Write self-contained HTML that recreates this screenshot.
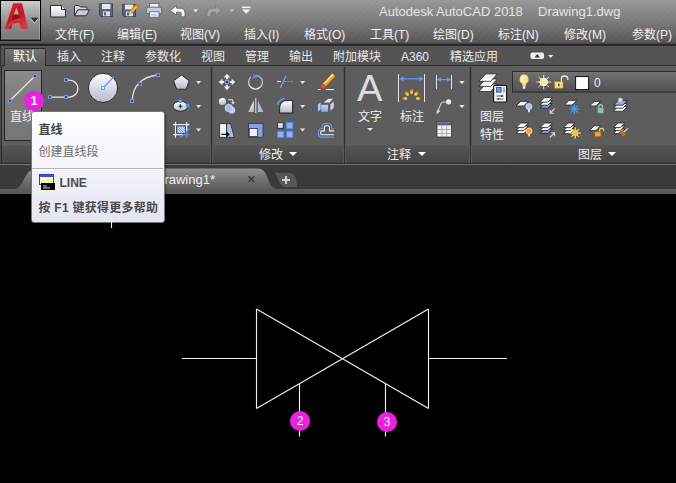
<!DOCTYPE html>
<html lang="zh-CN">
<head>
<meta charset="utf-8">
<title>Autodesk AutoCAD 2018 - Drawing1.dwg</title>
<style>
*{margin:0;padding:0;box-sizing:border-box}
html,body{width:676px;height:483px;overflow:hidden;background:#000}
body{position:relative;font-family:"Liberation Sans","Noto Sans CJK SC",sans-serif;font-size:12px;color:#e6e6e6}
.abs{position:absolute}
.t{position:absolute;white-space:nowrap;line-height:14px;height:14px}
#titlebg{left:0;top:0;width:676px;height:43px;background:linear-gradient(#989898,#7a7a7a 51%,#545454)}
#titlebg:after{content:"";position:absolute;inset:0;background:repeating-linear-gradient(135deg,rgba(255,255,255,.018) 0 2px,rgba(0,0,0,0) 2px 5px)}
#line1{left:0;top:43px;width:676px;height:3px;background:linear-gradient(#484848 0,#484848 33.3%,#222 33.4%,#222 66.6%,#2b2b2b 66.7%)}
#tabrow{left:0;top:46px;width:676px;height:20px;background:#545454}
#tabline{left:46px;top:65px;width:630px;height:1px;background:#2d2d2d}
#ribbon{left:0;top:66px;width:676px;height:79px;background:#5d5d5d}
#ptitle{left:0;top:145px;width:676px;height:18px;background:linear-gradient(#565656,#4c4c4c 50%,#454545)}
#line2{left:0;top:163px;width:676px;height:1px;background:#2a2a2a}
#line3{left:0;top:164px;width:676px;height:1px;background:#767676}
#docbar{left:0;top:165px;width:676px;height:24px;background:#3a3a3a}
#docstrip{left:0;top:189px;width:676px;height:5px;background:linear-gradient(#5c5c5c,#575757)}
.menu{top:28px;font-size:12px;color:#f0f0f0}
.tab{top:50px;font-size:12px;color:#e8e8e8}
#seltab{left:4px;top:48px;width:42px;height:18px;background:linear-gradient(#747474,#666 50%,#5d5d5d);border:1px solid #2c2c2c;border-bottom:none;border-radius:2px 2px 0 0}
.pt{top:148px;font-size:12px;color:#eee}
.vsep{position:absolute;top:67px;width:1px;height:95px;background:#3a3a3a}
.tri{position:absolute;width:0;height:0;border-left:4px solid transparent;border-right:4px solid transparent;border-top:4px solid #fff}
.stri{position:absolute;width:0;height:0;border-left:3px solid transparent;border-right:3px solid transparent;border-top:3px solid #e8e8e8}
.dot{position:absolute;width:20px;height:20px;border-radius:50%;background:#ee1fe0;color:#fff;text-align:center;font-size:12px;line-height:20px}
.lab{font-size:12px;color:#f0f0f0}
#tip{left:31px;top:111px;width:134px;height:112px;border:1px solid #767676;border-radius:3px;background:linear-gradient(#ffffff,#f4f4fa 50%,#e4e5f2);box-shadow:1px 1px 2px rgba(0,0,0,.4)}
</style>
</head>
<body>
<div id="titlebg" class="abs"></div>
<div id="line1" class="abs"></div>
<div id="tabrow" class="abs"></div>
<div id="ribbon" class="abs"></div>
<div id="ptitle" class="abs"></div>
<div id="tabline" class="abs"></div>
<div id="line2" class="abs"></div>
<div id="line3" class="abs"></div>
<div id="docbar" class="abs"></div>
<div id="docstrip" class="abs"></div>

<!-- app button -->



<!-- top chrome icons -->
<svg class="abs" style="left:0;top:0" width="676" height="194" viewBox="0 0 676 194">
<defs>
<linearGradient id="gA" x1="0" y1="0" x2="1" y2="1"><stop offset="0" stop-color="#e8232b"/><stop offset=".55" stop-color="#c4161e"/><stop offset="1" stop-color="#e24a4a"/></linearGradient>
<linearGradient id="gW" x1="0" y1="0" x2="0" y2="1"><stop offset="0" stop-color="#ffffff"/><stop offset="1" stop-color="#cfd3e0"/></linearGradient>
<linearGradient id="gC" x1="0" y1="0" x2="0" y2="1"><stop offset="0" stop-color="#ffffff"/><stop offset="1" stop-color="#b4b9cc"/></linearGradient>
<linearGradient id="gT" x1="0" y1="0" x2="0" y2="1"><stop offset="0" stop-color="#909090"/><stop offset=".5" stop-color="#747474"/><stop offset="1" stop-color="#5c5c5c"/></linearGradient>
<radialGradient id="gF" cx=".5" cy=".5" r=".5"><stop offset="0" stop-color="#fff3a0"/><stop offset=".5" stop-color="#f5a018"/><stop offset="1" stop-color="#c85a00"/></radialGradient>
<linearGradient id="gP" x1="0" y1="0" x2="0" y2="1"><stop offset="0" stop-color="#e86010"/><stop offset=".5" stop-color="#ffa818"/><stop offset="1" stop-color="#fff080"/></linearGradient>
<linearGradient id="gB" x1="0" y1="0" x2="1" y2="1"><stop offset="0" stop-color="#fffbe0"/><stop offset="1" stop-color="#f6d25a"/></linearGradient>
<linearGradient id="gD" x1="0" y1="0" x2="0" y2="1"><stop offset="0" stop-color="#737373"/><stop offset="1" stop-color="#505050"/></linearGradient>
<linearGradient id="gL" x1="0" y1="0" x2="0" y2="1"><stop offset="0" stop-color="#8c8c8c"/><stop offset=".4" stop-color="#7c7c7c"/><stop offset="1" stop-color="#767676"/></linearGradient>
<linearGradient id="gBtn" x1="0" y1="0" x2="0" y2="1"><stop offset="0" stop-color="#cbcbcb"/><stop offset=".55" stop-color="#8e8e8e"/><stop offset="1" stop-color="#787878"/></linearGradient>
<linearGradient id="gR" x1="0" y1="0" x2="0" y2="1"><stop offset="0" stop-color="#a8a8a8"/><stop offset="1" stop-color="#ececec"/></linearGradient>
<linearGradient id="gX" x1="0" y1="0" x2="0" y2="1"><stop offset="0" stop-color="#c0d6f6"/><stop offset="1" stop-color="#7ea6e4"/></linearGradient>
<linearGradient id="gS" x1="0" y1="0" x2="0" y2="1"><stop offset="0" stop-color="#e6e6ea"/><stop offset="1" stop-color="#ffffff"/></linearGradient>
</defs>
<!--APP-->
<g id="logo">
<rect x="0" y="0" width="41" height="40.8" fill="#000"/><rect x="1" y="1" width="39" height="38.5" fill="url(#gBtn)"/>
<path d="M13.2 3.2H22L28.2 29H21L19.4 22.6L12.2 23.6L11.4 29H4.8Z M16.5 7.8L13.4 14.6H19Z" fill="url(#gA)" fill-rule="evenodd"/><path d="M13.4 14.6H19L20 18.2L11.6 19.4Z" fill="#8e0a12" opacity=".75"/><path d="M5.6 28.6Q9 20 20 18.4L20.6 20.4Q11 21 8.6 28.8Z" fill="#f05a5a" opacity=".45"/>

<path d="M30.8 18.8H38.4L34.6 23.8Z" fill="#e8e8e8" opacity=".8"/><path d="M30.8 17.8H38.4L34.6 22.6Z" fill="#262c3a"/><rect x="39" y="1" width="1" height="38.5" fill="#fff" opacity=".22"/><rect x="1" y="38.5" width="39" height="1" fill="#fff" opacity=".2"/>
</g>
<!--QAT-->
<g id="qat">
<path d="M50.5 5.5H61.5L65.5 9.5V17H50.5Z" fill="url(#gW)" stroke="#2c2c2c"/>
<path d="M61.5 5.5V9.5H65.5" fill="#e8e8f0" stroke="#2c2c2c"/>
<path d="M74.5 15.5V6.5Q74.5 5.5 75.5 5.5H79L80.5 7H86Q87 7 87 8V9.5" fill="#d8dae2" stroke="#2c2c2c"/>
<path d="M74.5 15.8L77.8 9.8H89.6L86 15.8Z" fill="#c8ccd8" stroke="#2c2c2c"/>
<path d="M99.5 3.8H112.5V16.5H101L99.5 15Z" fill="#5a6478" stroke="#3a4252" stroke-width=".9"/>
<rect x="102" y="4" width="8.4" height="5" fill="#e4e6ee"/>
<rect x="103" y="11.4" width="7" height="4.8" fill="#d8dbe6"/>
<rect x="104.2" y="12.4" width="1.6" height="3" fill="#3a4252"/>
<path d="M122.5 4.4H135.5V16.5H124L122.5 15Z" fill="#5a6478" stroke="#3a4252" stroke-width=".9"/>
<rect x="125" y="4.6" width="8.2" height="4.8" fill="#e4e6ee"/>
<rect x="126" y="11.6" width="7" height="4.6" fill="#d8dbe6"/>
<rect x="127.2" y="12.6" width="1.6" height="2.8" fill="#3a4252"/>
<path d="M136.4 4.2L138.8 6.6L132.4 12.8L130 10.4Z" fill="#f4b020" stroke="#8a5a10" stroke-width=".5"/>
<path d="M136.4 4.2L138.8 6.6L137.8 7.6L135.4 5.2Z" fill="#e07818"/>
<path d="M130 10.4L132.4 12.8L129.2 13.6Z" fill="#f8ecd0" stroke="#5a4a30" stroke-width=".4"/>
<rect x="149.6" y="3.4" width="9.2" height="4.6" fill="#f2f3f7" stroke="#5a6070" stroke-width=".8"/>
<rect x="146.6" y="7.2" width="15" height="6.6" rx="1.6" fill="#c8ced9" stroke="#565c6a" stroke-width=".8"/>
<rect x="149.4" y="11.8" width="9.6" height="5.4" fill="#f6f7fb" stroke="#5a6070" stroke-width=".8"/>
<rect x="151" y="14.2" width="6.4" height="1.4" fill="#9cc0ee"/>
<path d="M170.4 10.4L176.6 5.4V8.2H180Q185 8.2 185 13V16.8H181.2V13.4Q181.2 12.2 179.6 12.2H176.6V15.4Z" fill="#f4f4f4" stroke="#5a5a5a" stroke-width=".8"/>
<path d="M221.6 10.4L215.4 5.4V8.2H212Q207 8.2 207 13V16.8H210.8V13.4Q210.8 12.2 212.4 12.2H215.4V15.4Z" fill="#a4a4a4" stroke="#747474" stroke-width=".7"/>
<path d="M193.2 9.2H198.4L195.8 12.2Z" fill="#e4e4e4"/>
<path d="M229.2 9.2H234.4L231.8 12.2Z" fill="#bcbcbc"/>
<rect x="242" y="6.6" width="8.4" height="1.6" fill="#f4f4f4"/>
<path d="M242 9.4H250.4L246.2 13.8Z" fill="#f4f4f4"/>
</g>
<!--TABICON-->
<rect x="530.5" y="52.5" width="13.5" height="6.5" rx="2" fill="#f0f0f0"/>
<path d="M534.5 57.5H540L537.2 54Z" fill="#333"/>
<path d="M548 55H553.4L550.7 58Z" fill="#e8e8e8"/>
<g id="rib">
<rect x="0" y="46" width="1" height="19" fill="#2e2e2e"/><rect x="0" y="65" width="5" height="1" fill="#2d2d2d"/><rect x="0" y="66" width="1" height="97" fill="#4a4a4a"/><rect x="1" y="66" width="1" height="97" fill="#2a2a2a"/>
<rect x="210" y="67" width="3" height="78" fill="#525252"/><rect x="210" y="145" width="3" height="18" fill="#595959"/><rect x="211" y="67" width="1" height="96" fill="#303030"/>
<rect x="343" y="67" width="3" height="78" fill="#525252"/><rect x="343" y="145" width="3" height="18" fill="#595959"/><rect x="344" y="67" width="1" height="96" fill="#303030"/>
<rect x="469" y="67" width="3" height="78" fill="#525252"/><rect x="469" y="145" width="3" height="18" fill="#595959"/><rect x="470" y="67" width="1" height="96" fill="#303030"/>
<rect x="4.5" y="70.5" width="37" height="70" fill="url(#gL)" stroke="#262626"/>
<path d="M10 100.5L35 76" stroke="#e6e6e6" stroke-width="1.3" fill="none"/><rect x="8.5" y="99.5" width="3" height="3" fill="#4a4a4a" stroke="#5c9dff" stroke-width="1"/><rect x="33.5" y="74.5" width="3" height="3" fill="#4a4a4a" stroke="#5c9dff" stroke-width="1"/>
<path d="M50 97H66M66 80H69.4A8.5 8.5 0 0 1 69.4 97H66" stroke="#ececec" stroke-width="1.25" fill="none"/><rect x="48.5" y="95.5" width="3" height="3" fill="#4a4a4a" stroke="#5c9dff" stroke-width="1"/><rect x="64.5" y="95.5" width="3" height="3" fill="#4a4a4a" stroke="#5c9dff" stroke-width="1"/><rect x="64.5" y="78.5" width="3" height="3" fill="#4a4a4a" stroke="#5c9dff" stroke-width="1"/>
<circle cx="103" cy="87.9" r="14.6" fill="url(#gC)" stroke="#2a2a2a" stroke-width="1"/><path d="M103 88L113.6 77" stroke="#5c9dff" stroke-width="1.2"/><rect x="101.5" y="86.5" width="3" height="3" fill="#eceef6" stroke="#5c9dff" stroke-width="1"/>
<path d="M132.3 100.6Q133 78 158 75" stroke="#dcdcdc" stroke-width="1.3" fill="none"/><rect x="130.5" y="99.5" width="3" height="3" fill="#4a4a4a" stroke="#5c9dff" stroke-width="1"/><rect x="138.5" y="82.5" width="3" height="3" fill="#4a4a4a" stroke="#5c9dff" stroke-width="1"/><rect x="156.5" y="73.5" width="3" height="3" fill="#4a4a4a" stroke="#5c9dff" stroke-width="1"/>
<path d="M181.4 75L189.2 80.8L186.2 89.2H176.6L173.6 80.8Z" fill="url(#gC)" stroke="#2a2a2a" stroke-width="1"/><path d="M196 81H201.2L198.6 84Z" fill="#e8e8e8"/>
<ellipse cx="180.4" cy="106.3" rx="7.3" ry="5" fill="url(#gC)" stroke="#2a2a2a"/><path d="M178.4 106.3H182.4M180.4 104.3V108.3" stroke="#222" stroke-width="1.1"/><rect x="179" y="100" width="2.6" height="2.6" fill="#9aa" stroke="#5c9dff" stroke-width=".9"/><rect x="186.2" y="104.2" width="2.6" height="2.6" fill="#777" stroke="#5c9dff" stroke-width=".9"/><path d="M196 105H201.2L198.6 108Z" fill="#e8e8e8"/>
<g stroke="#f0f0f0" stroke-width="1.2"><path d="M173 124.6H189.4M173 134.7H183M175.5 122V137.8M186.7 122V131"/></g><g stroke="#5c9dff" stroke-width="1.1"><path d="M183 134.7H189.4M186.7 131V137.8M189.4 128.6L180.4 137.6"/></g><rect x="177" y="126" width="8.2" height="7.6" fill="#e4ecfb" stroke="#2a4c9c" stroke-width="1"/><path d="M177.6 129L182 133.4M177.6 126.6L184.4 133.4M180 126.6L184.6 131.2M182.6 126.6L184.6 128.6M177.6 131.4L179.6 133.4" stroke="#5f8be0" stroke-width="1"/><path d="M196 128.5H201.2L198.6 131.5Z" fill="#e8e8e8"/>
<g fill="#f0f0f0"><path d="M227 73.8L230.2 77.4H228.1V79.2H225.9V77.4H223.8Z"/><path d="M227 73.8L230.2 77.4H228.1V79.2H225.9V77.4H223.8Z" transform="rotate(90 227 82)"/><path d="M227 73.8L230.2 77.4H228.1V79.2H225.9V77.4H223.8Z" transform="rotate(180 227 82)"/><path d="M227 73.8L230.2 77.4H228.1V79.2H225.9V77.4H223.8Z" transform="rotate(270 227 82)"/></g><rect x="225.5" y="80.5" width="3" height="3" fill="#444" stroke="#5c9dff" stroke-width="1"/>
<circle cx="255.5" cy="82.2" r="6.9" fill="none" stroke="url(#gR)" stroke-width="1.3"/><rect x="251" y="73" width="4.4" height="5" fill="#5d5d5d"/><path d="M253 74L258.4 76.4L253 79Z" fill="#4c8cf0"/>
<path d="M277 81.5H281" stroke="#ececec" stroke-width="1.1"/><path d="M284.2 81.5H286M287.4 81.5H289.2M290.6 81.5H292.8" stroke="#6aa6ff" stroke-width="1"/><path d="M280.4 87.8L286 76" stroke="#6aa6ff" stroke-width="1.2"/><path d="M300 81H305.2L302.6 84Z" fill="#e8e8e8"/>
<path d="M332.4 73.4L335.2 76.6L326.8 85.2L324.2 82.4Z" fill="#f0a020"/><path d="M332.4 73.4L333.8 75L325.4 83.6L324.2 82.4Z" fill="#ffe070"/><path d="M324 82.4L326.6 85.2L325.4 86.2L322.8 83.6Z" fill="#f4f4f4"/><circle cx="323.2" cy="86" r="2.5" fill="#e05010"/><path d="M318 89.5H320.6M325.8 89.5H334" stroke="#f0f0f0" stroke-width="1"/>
<circle cx="222.4" cy="101.5" r="3.6" fill="url(#gC)"/><circle cx="231.8" cy="110.2" r="3.4" fill="#bcd0f2"/><circle cx="228.8" cy="108" r="3.8" fill="#a4c0ea" stroke="#d4e2f8" stroke-width=".6"/><path d="M228.4 99.8H231.6Q233 99.8 233 101.2V102.6" stroke="#ececec" stroke-width="1.1" fill="none"/><path d="M231.2 102.2H234.8L233 104.4Z" fill="#ececec"/>
<path d="M253.8 100.6V112H248.2Z" fill="url(#gC)"/><path d="M257.8 100.6V112H263.4Z" fill="#a4bbe6"/><path d="M255.8 98V113" stroke="#e8e8e8" stroke-width="1"/>
<path d="M279.6 113V108.4Q279.6 100.4 288 100.4H292.6V113Z" fill="url(#gC)" stroke="#222" stroke-width="1"/><path d="M277.6 104.6Q279 99.4 284.6 98.2" stroke="#5c9dff" stroke-width="1.5" fill="none"/><path d="M300 105H305.2L302.6 108Z" fill="#e8e8e8"/>
<path d="M321.2 104.8H328V111.8H321.2Z" fill="url(#gX)"/><path d="M323.6 102.6L328.4 98.8H333L329.6 102.6Z" fill="#dce8fa"/><path d="M318 104.4L320.6 102.2V109.6L318 111.4Z" fill="#b4ccf0"/><path d="M330.4 104.2L333.8 101.6V108L330.4 110.4Z" fill="#c4d8f6"/>
<path d="M219.6 123.6H226.6V137.4H219.6Z" fill="#f4f4f4" stroke="#222" stroke-width=".8"/><path d="M226.6 123.6H230.6L234.4 137.4H226.6Z" fill="#a4bde8" stroke="#223" stroke-width=".8"/><path d="M221.4 134.4H228.6M226.6 132.4L229 134.4L226.6 136.4" stroke="#000" stroke-width="1.2" fill="none"/>
<rect x="248.4" y="123.4" width="14.6" height="13.8" fill="#86a2dc" stroke="#2a3040" stroke-width=".8"/><rect x="249.2" y="128.6" width="8.4" height="7.8" fill="#f0f0f4" stroke="#2a3040" stroke-width=".8"/>
<rect x="277.6" y="122.8" width="5.6" height="5.6" fill="url(#gC)" stroke="#222" stroke-width=".8"/>
<rect x="286.6" y="122.6" width="6.2" height="6.2" fill="#8cb4f6" stroke="#4c8cf0" stroke-width="1"/>
<rect x="277.6" y="131.2" width="6.2" height="6.2" fill="#8cb4f6" stroke="#4c8cf0" stroke-width="1"/>
<rect x="286.6" y="131.2" width="6.2" height="6.2" fill="#8cb4f6" stroke="#4c8cf0" stroke-width="1"/>
<path d="M300 128.5H305.2L302.6 131.5Z" fill="#e8e8e8"/>
<path d="M334 128.7H331.6V126.6Q331.6 123.5 328.6 123.5H325.2Q322.2 123.5 322.2 126.6V128.7H321.4Q318.5 128.7 318.5 131.6V134.2Q318.5 137.1 321.4 137.1H334" stroke="#5c9dff" stroke-width="1.1" fill="none"/><path d="M334 130.9H329.5V127.4Q329.5 125.8 327.9 125.8H325.9Q324.3 125.8 324.3 127.4V130.9H322.2Q320.7 130.9 320.7 132.3V133.4Q320.7 134.8 322.2 134.8H334" stroke="#f2f2f2" stroke-width="1.1" fill="none"/>
<path d="M398.5 74V102M424.5 74V102" stroke="#e4e4e4" stroke-width="1"/><path d="M401 78.8H422" stroke="#5c9dff" stroke-width="1.2"/><path d="M399.4 78.8L403.4 76.2V81.4ZM423.6 78.8L419.6 76.2V81.4Z" fill="#5c9dff"/>
<path d="M411.6 88.6Q415 92.4 411.6 94.2Q408.2 92.4 411.6 88.6Z" fill="url(#gP)" transform="rotate(-90 411.6 98.4)"/>
<path d="M411.6 88.6Q415 92.4 411.6 94.2Q408.2 92.4 411.6 88.6Z" fill="url(#gP)" transform="rotate(-45 411.6 98.4)"/>
<path d="M411.6 88.6Q415 92.4 411.6 94.2Q408.2 92.4 411.6 88.6Z" fill="url(#gP)" transform="rotate(0 411.6 98.4)"/>
<path d="M411.6 88.6Q415 92.4 411.6 94.2Q408.2 92.4 411.6 88.6Z" fill="url(#gP)" transform="rotate(45 411.6 98.4)"/>
<path d="M411.6 88.6Q415 92.4 411.6 94.2Q408.2 92.4 411.6 88.6Z" fill="url(#gP)" transform="rotate(90 411.6 98.4)"/>
<path d="M436.5 75V89M451.5 75V89" stroke="#e4e4e4" stroke-width="1"/><path d="M437.4 79.6H450.4" stroke="#5c9dff" stroke-width="1.2"/><path d="M437.4 79.6L441 77.2V82ZM450.6 79.6L447 77.2V82Z" fill="#5c9dff"/><path d="M459.4 81H464.59999999999997L462.0 84Z" fill="#e8e8e8"/>
<path d="M437.4 112.6L441 103.6Q441.6 102 443.6 102H446" stroke="#d8d8d8" stroke-width="1.1" fill="none"/><path d="M436.4 114.4L437 109.4L440.4 111Z" fill="#d8d8d8"/><circle cx="448.6" cy="101.8" r="2.6" fill="#f0f0f0"/><path d="M459.4 105H464.59999999999997L462.0 108Z" fill="#e8e8e8"/>
<rect x="437" y="122" width="14.4" height="15" fill="#f2f2f4" stroke="#333" stroke-width=".8"/><rect x="437.4" y="122.4" width="13.6" height="3" fill="#5a6478"/><path d="M437 129.5H451.4M437 133.5H451.4M441.8 125.6V137M446.6 125.6V137" stroke="#9a9aa4" stroke-width=".8"/>
<path d="M479 91.5L485.7 84H497.4L490.7 91.5Z" fill="url(#gS)" stroke="#262626" stroke-width=".8"/><path d="M479 86.4L485.7 78.9H497.4L490.7 86.4Z" fill="url(#gS)" stroke="#262626" stroke-width=".8"/><path d="M479 81.3L485.7 73.8H497.4L490.7 81.3Z" fill="url(#gS)" stroke="#262626" stroke-width=".8"/><rect x="493.6" y="85.4" width="13" height="16.6" rx="1" fill="#f4f4f6" stroke="#1a1a1a" stroke-width="1.2"/><rect x="496.4" y="87.4" width="4.8" height="4.8" fill="#6c9ce4" stroke="#2a4c9c" stroke-width=".8"/><rect x="503" y="87.2" width="2" height="5.2" fill="#a8acb4"/><path d="M496.4 96H503.6M496.4 99H503.6" stroke="#444" stroke-width=".8"/><rect x="501" y="95" width="1.6" height="2" fill="#444"/><rect x="497.6" y="98" width="1.6" height="2" fill="#444"/>
<rect x="512.5" y="71.5" width="170" height="20.6" fill="url(#gD)" stroke="#2a2a2a"/>
<path d="M524.1 74.6A4.2 4.8 0 0 1 526 83.8V86H522.2V83.8A4.2 4.8 0 0 1 524.1 74.6Z" fill="url(#gB)" stroke="#a08840" stroke-width=".5"/><rect x="522.8" y="86" width="2.6" height="2.8" fill="#e8e8e8"/>
<g stroke="#f0eee0" stroke-width=".9"><path d="M543.7 74.6V89.4M536.3 82H551.1M538.4 76.8L549 87.2M549 76.8L538.4 87.2"/></g><circle cx="543.7" cy="82" r="3.8" fill="#ffeaa0" stroke="#fffbe8" stroke-width="1"/>
<rect x="554.6" y="81.6" width="8.4" height="6.6" fill="#f4dc80" stroke="#a88830" stroke-width=".6"/><path d="M561.4 81.4V78.4Q561.4 76 564.6 76Q567.8 76 567.8 78.4V80" stroke="#f4e8b0" stroke-width="1.3" fill="none"/><rect x="558" y="83.6" width="1.6" height="2.6" fill="#7a6020"/>
<rect x="575.6" y="76.6" width="13" height="13" fill="#fff" stroke="#111" stroke-width="1"/>
<path d="M516 106L520.6 101.4H528.4L523.8 106Z" fill="#f6f6f6" stroke="#1e1e1e" stroke-width=".8"/><rect x="528" y="108.6" width="1.8" height="3.6" fill="#e8e8e8"/><circle cx="528.9" cy="106.6" r="3" fill="#9ccaff" stroke="#e4f0ff" stroke-width=".7"/>
<path d="M540 108.2L544.6 103.6H552.4L547.8 108.2Z" fill="#6f9ff0" stroke="#1e1e1e" stroke-width=".8"/><path d="M540 105.2L544.6 100.6H552.4L547.8 105.2Z" fill="#f6f6f6" stroke="#1e1e1e" stroke-width=".8"/><path d="M540 102.2L544.6 97.6H552.4L547.8 102.2Z" fill="#f6f6f6" stroke="#1e1e1e" stroke-width=".8"/><path d="M554.6 108.6L550.4 113M550.2 109.8V113.2H553.6" stroke="#d8d8d8" stroke-width="1.1" fill="none"/>
<path d="M564.4 105L569 100.4H576.8L572.2 105Z" fill="#f6f6f6" stroke="#1e1e1e" stroke-width=".8"/><g stroke="#4c96ff" stroke-width="1.2"><path d="M574.4 104.2V114M569.6 109.1H579.2M571 105.7L577.8 112.5M577.8 105.7L571 112.5"/></g>
<path d="M589.6 106L594.2 101.4H600.6L596 106Z" fill="#f6f6f6" stroke="#1e1e1e" stroke-width=".8"/><rect x="597.4" y="107.8" width="6.4" height="5.4" fill="#8ec4b4" stroke="#4a7a70" stroke-width=".7"/><path d="M598.8 107.8V106.2Q598.8 104.6 600.6 104.6Q602.4 104.6 602.4 106.2V107.8" stroke="#a8d4c8" stroke-width="1.1" fill="none"/>
<path d="M613.4 111.2L618 106.6H627.4L622.8 111.2Z" fill="#f6f6f6" stroke="#1e1e1e" stroke-width=".8"/><path d="M613.4 108.2L618 103.6H627.4L622.8 108.2Z" fill="#f6f6f6" stroke="#1e1e1e" stroke-width=".8"/><path d="M613.4 105.2L618 100.6H627.4L622.8 105.2Z" fill="#8ab0f0" stroke="#1e1e1e" stroke-width=".8"/><circle cx="620.4" cy="100.2" r="2.4" fill="#dcdcdc" stroke="#8a8a8a" stroke-width=".6"/>
<path d="M516 133.6L520.6 129H528.4L523.8 133.6Z" fill="#f6f6f6" stroke="#1e1e1e" stroke-width=".8"/><path d="M516 130.6L520.6 126H528.4L523.8 130.6Z" fill="#f6f6f6" stroke="#1e1e1e" stroke-width=".8"/><path d="M516 127.6L520.6 123H528.4L523.8 127.6Z" fill="#f6f6f6" stroke="#1e1e1e" stroke-width=".8"/><rect x="528.2" y="133" width="1.8" height="3.4" fill="#e8e8e8"/><circle cx="529.1" cy="131" r="3" fill="#ffa428" stroke="#ffe4b0" stroke-width=".7"/>
<path d="M540 133.6L544.6 129H552.4L547.8 133.6Z" fill="#6f9ff0" stroke="#1e1e1e" stroke-width=".8"/><path d="M540 130.6L544.6 126H552.4L547.8 130.6Z" fill="#f6f6f6" stroke="#1e1e1e" stroke-width=".8"/><path d="M540 127.6L544.6 123H552.4L547.8 127.6Z" fill="#f6f6f6" stroke="#1e1e1e" stroke-width=".8"/><path d="M550 137.4L554.4 133M551.2 132.8H554.6V136.2" stroke="#d8d8d8" stroke-width="1.1" fill="none"/>
<path d="M563.6 133.6L568.2 129H575L570.4 133.6Z" fill="#f6f6f6" stroke="#1e1e1e" stroke-width=".8"/><path d="M563.6 130.6L568.2 126H575L570.4 130.6Z" fill="#f6f6f6" stroke="#1e1e1e" stroke-width=".8"/><path d="M563.6 127.6L568.2 123H575L570.4 127.6Z" fill="#f6f6f6" stroke="#1e1e1e" stroke-width=".8"/><g stroke="#fff2b8" stroke-width="1"><path d="M575.2 127.4V138.6M569.6 133H580.8M571.2 129L579.2 137M579.2 129L571.2 137"/></g><circle cx="575.2" cy="133" r="3.2" fill="#ffc424"/>
<path d="M589.6 130.4L594.2 125.8H600.6L596 130.4Z" fill="#f6f6f6" stroke="#1e1e1e" stroke-width=".8"/><rect x="594.6" y="131.8" width="6.4" height="5" fill="#f4aa20" stroke="#8a5a10" stroke-width=".7"/><path d="M599.6 131.6V130Q599.6 128.4 601.6 128.4Q603.6 128.4 603.6 130V131" stroke="#f8cc60" stroke-width="1.1" fill="none"/>
<path d="M613.4 133.6L618 129H624.8L620.2 133.6Z" fill="#f6f6f6" stroke="#1e1e1e" stroke-width=".8"/><path d="M613.4 130.6L618 126H624.8L620.2 130.6Z" fill="#f6f6f6" stroke="#1e1e1e" stroke-width=".8"/><path d="M613.4 127.6L618 123H624.8L620.2 127.6Z" fill="#f6f6f6" stroke="#1e1e1e" stroke-width=".8"/><path d="M618.8 132.6L623.2 136.8L627 134L622.4 130.4Z" fill="#c46c20" stroke="#6a3810" stroke-width=".5"/><path d="M623.8 132L628 128.4" stroke="#e8e8e8" stroke-width="1.1"/>
</g>
</svg>

<!-- title -->
<div class="t" id="title1" style="left:379px;top:5px;font-size:13px;color:#e4e4e4">Autodesk AutoCAD 2018</div>
<div class="t" id="title2" style="left:538px;top:5px;font-size:13px;color:#e4e4e4">Drawing1.dwg</div>

<!-- menu -->
<div class="t menu" style="left:55px">文件(F)</div>
<div class="t menu" style="left:117px">编辑(E)</div>
<div class="t menu" style="left:180px">视图(V)</div>
<div class="t menu" style="left:244px">插入(I)</div>
<div class="t menu" style="left:304px">格式(O)</div>
<div class="t menu" style="left:370px">工具(T)</div>
<div class="t menu" style="left:433px">绘图(D)</div>
<div class="t menu" style="left:498px">标注(N)</div>
<div class="t menu" style="left:564px">修改(M)</div>
<div class="t menu" style="left:632px">参数(P)</div>

<!-- ribbon tabs -->
<div id="seltab" class="abs"></div>
<div class="t tab" style="left:13px;color:#fff">默认</div>
<div class="t tab" style="left:57px">插入</div>
<div class="t tab" style="left:101px">注释</div>
<div class="t tab" style="left:145px">参数化</div>
<div class="t tab" style="left:201px">视图</div>
<div class="t tab" style="left:245px">管理</div>
<div class="t tab" style="left:289px">输出</div>
<div class="t tab" style="left:333px">附加模块</div>
<div class="t tab" style="left:401px">A360</div>
<div class="t tab" style="left:450px">精选应用</div>

<!-- panel titles -->
<div class="t pt" style="left:259px">修改</div><div class="tri" style="left:289px;top:152px"></div>
<div class="t pt" style="left:387px">注释</div><div class="tri" style="left:418px;top:152px"></div>
<div class="t pt" style="left:578px">图层</div><div class="tri" style="left:608px;top:152px"></div>


<!-- ribbon labels -->
<div class="t lab" style="left:10px;top:110px">直线</div>
<div class="t lab" style="left:46px;top:111px">多段线</div>
<div class="t lab" style="left:97px;top:111px">圆</div>
<div class="t lab" style="left:133px;top:111px">圆弧</div>
<div class="t lab" style="left:358px;top:110px">文字</div>
<div class="stri" style="left:367px;top:128px"></div>
<div class="t lab" style="left:400px;top:110px">标注</div>
<div class="t lab" style="left:480px;top:110px">图层</div>
<div class="t lab" style="left:480px;top:128px">特性</div>
<div class="t" id="bigA" style="left:357px;top:69px;font-size:37px;line-height:40px;height:40px;color:#dcdcdc;transform:scaleX(1.03);transform-origin:0 0">A</div>
<div class="t" style="left:594px;top:76px;font-size:12px;color:#f0f0f0">0</div>

<!-- doc tabs -->
<svg class="abs" style="left:0;top:165px" width="676" height="29" viewBox="0 165 676 29">
<path d="M14 189.2C24 189.2 24 168.5 36 168.5H258C270 168.5 266 189.2 278 189.2Z" fill="url(#gT)"/>

<path d="M274.5 172.8H288C296 172.8 297 181 297 187H285C279 187 278 176 274.5 172.8Z" fill="#565656"/>
<path d="M282 180H290M286 176V184" stroke="#d0d0d0" stroke-width="2"/>
<path d="M248.4 176.2L254.2 182M254.2 176.2L248.4 182" stroke="#383838" stroke-width="1.4"/>
</svg>
<div class="t" style="left:155px;top:173px;font-size:13px;color:#f0f0f0">Drawing1*</div>

<!-- tooltip -->
<div id="tip" class="abs">
<div class="t" style="left:6.5px;top:11px;font-weight:bold;color:#444">直线</div>
<div class="t" style="left:6.5px;top:33px;color:#6c6c6c">创建直线段</div>
<div class="abs" style="left:0;top:56px;width:131px;height:1px;background:#b4b4b8"></div>
<div class="abs" style="left:0;top:57px;width:131px;height:1px;background:#fff"></div>
<svg class="abs" style="left:6.5px;top:62px" width="16" height="16" viewBox="0 0 16 16"><rect x=".5" y=".5" width="14" height="10" fill="#fff8b0" stroke="#2848c0"/><rect x="1" y="1" width="13" height="2" fill="#3858d0"/><rect x="2" y="9" width="14" height="7" fill="#000"/><path d="M4 12H8M4 14H11" stroke="#ddd" stroke-width="1"/></svg>
<div class="t" style="left:27.5px;top:64px;font-weight:bold;color:#4a4a4a">LINE</div>
<div class="t" style="left:6.5px;top:89px;font-weight:bold;color:#4a4a4a;letter-spacing:.25px">按 F1 键获得更多帮助</div>
</div>

<!-- drawing -->
<svg class="abs" style="left:0;top:194px" width="676" height="289" viewBox="0 194 676 289">
<g stroke="#f2f2f2" stroke-width="1.12" fill="none">
<path d="M182 358.5H256.5M428.5 358.5H507M256.5 309V408.5M428.5 309V408.5M256.5 309L428.5 408.5M256.5 408.5L428.5 309M299.5 384V436.5M385.5 384V436.5M111.5 222V228"/>
</g>
</svg>
<div class="dot" style="left:290px;top:411px">2</div>
<div class="dot" style="left:377px;top:412px">3</div>
<div class="dot" style="left:24px;top:91px;font-weight:bold">1</div>
</body>
</html>
